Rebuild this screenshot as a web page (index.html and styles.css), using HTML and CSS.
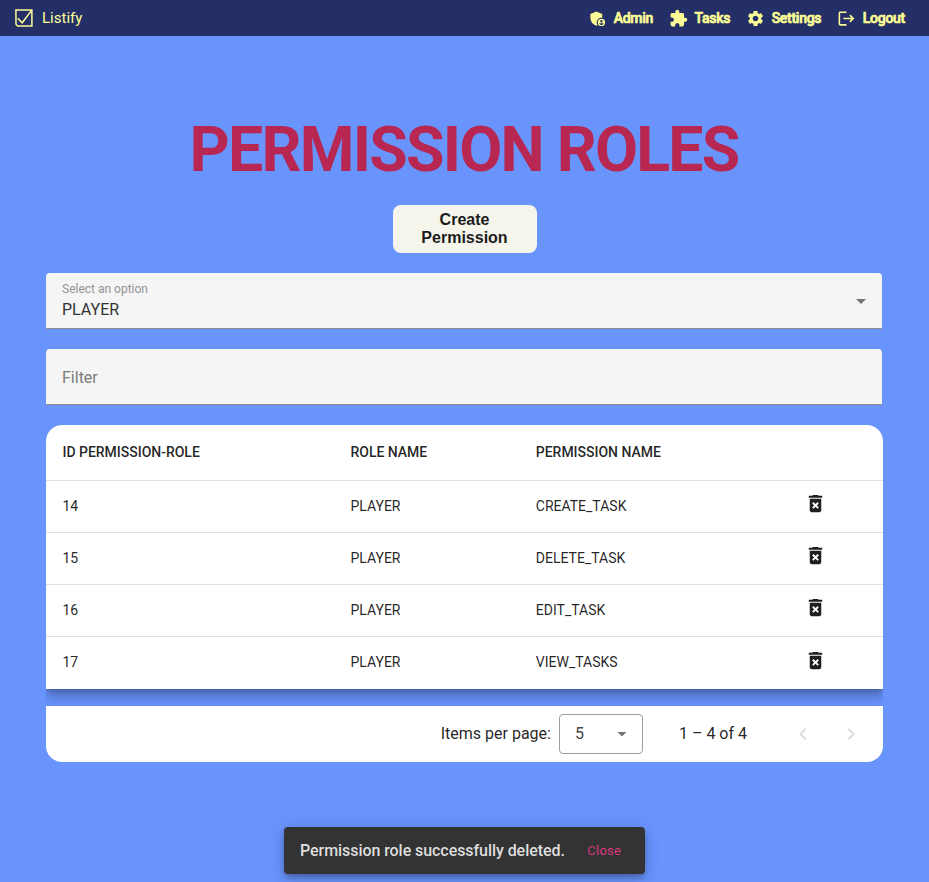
FILE: index.html
```html
<!DOCTYPE html>
<html lang="en">
<head>
<meta charset="utf-8">
<title>Listify</title>
<link rel="stylesheet" href="styles.css">
</head>
<body>
<svg class="defs" width="0" height="0" aria-hidden="true">
  <symbol id="trash" viewBox="0 0 24 24"><path d="M6 19c0 1.1.9 2 2 2h8c1.1 0 2-.9 2-2V7H6v12zm2.46-7.12 1.41-1.41L12 12.59l2.12-2.12 1.41 1.41L13.41 14l2.12 2.12-1.41 1.41L12 15.41l-2.12 2.12-1.41-1.41L10.59 14l-2.13-2.12zM15.5 4l-1-1h-5l-1 1H5v2h14V4z"/></symbol>
</svg>
<header class="navbar">
  <a class="brand">
    <svg class="brand-icon" viewBox="0 0 18 18"><path d="M.9 1.1h16v15.8H2.6L1 15.2z M2.7 9.2l4.5 4.6L16.6 1.4"/></svg>
    <span>Listify</span>
  </a>
  <nav class="links">
    <a class="link"><svg viewBox="0 0 24 24"><path d="M17 11c.34 0 .67.04 1 .09V6.27L10.5 3 3 6.27v4.91c0 4.54 3.2 8.79 7.5 9.82.55-.13 1.08-.32 1.6-.55-.69-.98-1.1-2.17-1.1-3.45 0-3.31 2.69-6 6-6z"/><path fill-rule="evenodd" d="M17 12.4a4.6 4.6 0 1 0 0 9.2 4.6 4.6 0 0 0 0-9.2zm0 1.5a1.5 1.5 0 1 1 0 3 1.5 1.5 0 0 1 0-3zm-2.8 4h5.6c-.4 1.4-1.5 2.2-2.8 2.2s-2.4-.8-2.8-2.2z"/></svg><span>Admin</span></a>
    <a class="link"><svg viewBox="0 0 24 24"><path d="M20.5 11H19V7c0-1.1-.9-2-2-2h-4V3.5C13 2.12 11.88 1 10.5 1S8 2.12 8 3.5V5H4c-1.1 0-1.99.9-1.99 2v3.8H3.5c1.49 0 2.7 1.21 2.7 2.7s-1.21 2.7-2.7 2.7H2V20c0 1.1.9 2 2 2h3.8v-1.5c0-1.49 1.21-2.7 2.7-2.7s2.7 1.21 2.7 2.7V22H17c1.1 0 2-.9 2-2v-4h1.5c1.38 0 2.5-1.12 2.5-2.5S21.88 11 20.5 11z"/></svg><span>Tasks</span></a>
    <a class="link"><svg viewBox="0 0 24 24"><path d="M19.14 12.94c.04-.3.06-.61.06-.94 0-.32-.02-.64-.07-.94l2.03-1.58c.18-.14.23-.41.12-.61l-1.92-3.32c-.12-.22-.37-.29-.59-.22l-2.39.96c-.5-.38-1.03-.7-1.62-.94l-.36-2.54c-.04-.24-.24-.41-.48-.41h-3.84c-.24 0-.43.17-.47.41l-.36 2.54c-.59.24-1.13.57-1.62.94l-2.39-.96c-.22-.08-.47 0-.59.22L2.74 8.87c-.12.21-.08.47.12.61l2.03 1.58c-.05.3-.09.63-.09.94s.02.64.07.94l-2.03 1.58c-.18.14-.23.41-.12.61l1.92 3.32c.12.22.37.29.59.22l2.39-.96c.5.38 1.03.7 1.62.94l.36 2.54c.05.24.24.41.48.41h3.84c.24 0 .44-.17.47-.41l.36-2.54c.59-.24 1.13-.56 1.62-.94l2.39.96c.22.08.47 0 .59-.22l1.92-3.32c.12-.22.07-.47-.12-.61l-2.01-1.58zM12 15.6c-1.98 0-3.6-1.62-3.6-3.6s1.62-3.6 3.6-3.6 3.6 1.62 3.6 3.6-1.62 3.6-3.6 3.6z"/></svg><span>Settings</span></a>
    <a class="link"><svg viewBox="0 0 24 24"><path d="m17 7-1.41 1.41L18.17 11H8v2h10.17l-2.58 2.58L17 17l5-5zM4 5h8V3H4c-1.1 0-2 .9-2 2v14c0 1.1.9 2 2 2h8v-2H4V5z"/></svg><span>Logout</span></a>
  </nav>
</header>
<main class="page">
  <h1 class="title">PERMISSION ROLES</h1>
  <button class="create">Create Permission</button>
  <div class="field">
    <div class="field-text">
      <span class="field-label">Select an option</span>
      <span class="field-value">PLAYER</span>
    </div>
    <span class="arrow"></span>
  </div>
  <div class="field"><span class="placeholder">Filter</span></div>
  <section class="card">
    <div class="table">
      <div class="row head"><span>ID PERMISSION-ROLE</span><span>ROLE NAME</span><span>PERMISSION NAME</span><span></span></div>
      <div class="row"><span>14</span><span>PLAYER</span><span>CREATE_TASK</span><svg class="trash"><use href="#trash"/></svg></div>
      <div class="row"><span>15</span><span>PLAYER</span><span>DELETE_TASK</span><svg class="trash"><use href="#trash"/></svg></div>
      <div class="row"><span>16</span><span>PLAYER</span><span>EDIT_TASK</span><svg class="trash"><use href="#trash"/></svg></div>
      <div class="row"><span>17</span><span>PLAYER</span><span>VIEW_TASKS</span><svg class="trash"><use href="#trash"/></svg></div>
    </div>
    <div class="paginator">
      <span class="per-page">Items per page:</span>
      <div class="size"><span>5</span><span class="arrow"></span></div>
      <span class="range">1 – 4 of 4</span>
      <svg class="chev" viewBox="0 0 24 24"><path d="M15.41 7.41 14 6l-6 6 6 6 1.41-1.41L10.83 12z"/></svg>
      <svg class="chev" viewBox="0 0 24 24"><path d="M10 6 8.59 7.41 13.17 12l-4.58 4.59L10 18l6-6z"/></svg>
    </div>
  </section>
</main>
<div class="snackbar"><span class="message">Permission role successfully deleted.</span><span class="close">Close</span></div>
</body>
</html>
```
FILE: styles.css
```css
* { box-sizing: border-box; }
body {
  margin: 0;
  height: 882px;
  overflow: hidden;
  background: #6994fc;
  color: rgba(0, 0, 0, .87);
  font-family: Roboto, "Liberation Sans", sans-serif;
  font-weight: 400;
}
.defs { position: absolute; }
.navbar {
  height: 36px;
  padding: 0 24px 0 15px;
  display: flex;
  align-items: center;
  justify-content: space-between;
  background: #232f66;
  color: #fdfd96;
}
.brand { display: flex; align-items: center; gap: 9px; font-size: 15px; }
.brand-icon { width: 18px; height: 18px; fill: none; stroke: #fdfd96; stroke-width: 1.5; }
.links { display: flex; gap: 16px; }
.link {
  display: flex;
  align-items: center;
  gap: 6.5px;
  font-size: 14px;
  font-weight: 500;
  letter-spacing: -.27px;
  -webkit-text-stroke: .7px #fdfd96;
}
.link svg { width: 19px; height: 19px; fill: #fdfd96; }
.page { padding: 83px 46px 0; }
.title {
  margin: 0;
  height: 60px;
  line-height: 62px;
  text-align: center;
  white-space: nowrap;
  color: #b82752;
  font-size: 62.5px;
  font-weight: 700;
  letter-spacing: -1.75px;
  text-indent: -1px;
}
.create {
  display: block;
  width: 144px;
  height: 48px;
  margin: 26px auto 20px;
  padding: 0 20px;
  border: 0;
  border-radius: 8px;
  background: #f5f5ec;
  color: #1c1c1c;
  font: 700 16px/18px "Liberation Sans", sans-serif;
}
.field {
  width: 836px;
  height: 56px;
  margin-bottom: 20px;
  padding: 2px 16px 0;
  display: flex;
  align-items: center;
  justify-content: space-between;
  background: #f5f5f5;
  border-bottom: 1px solid #8c8c8c;
  border-radius: 4px 4px 0 0;
}
.field-text { display: flex; flex-direction: column; }
.field-label { font-size: 12px; line-height: 14px; color: #949494; }
.field-value { font-size: 16px; line-height: 24px; padding-top: 2px; color: #333; }
.placeholder { font-size: 16px; color: #7c7c7c; }
.arrow { width: 10px; height: 5px; background: #757575; clip-path: polygon(0 0, 100% 0, 50% 100%); }
.card { width: 837px; overflow: hidden; border-radius: 16px; }
.table {
  background: #fff;
  box-shadow: 0 5px 5px -3px rgba(0,0,0,.2), 0 8px 10px 1px rgba(0,0,0,.14), 0 3px 14px 2px rgba(0,0,0,.12);
}
.row {
  height: 52px;
  padding: 0 0 2px 16.5px;
  display: grid;
  grid-template-columns: 288px 185.3px 268.7px 1fr;
  align-items: center;
  font-size: 14px;
  border-bottom: 1px solid #e0e0e0;
}
.row:last-child { border-bottom: 0; }
.head { height: 56px; font-weight: 500; letter-spacing: -.02px; }
.trash { width: 23px; height: 23px; margin-top: -4px; fill: #1f1f1f; }
.paginator {
  height: 56px;
  margin-top: 17px;
  padding: 0 20px 0 0;
  display: flex;
  align-items: center;
  justify-content: flex-end;
  position: relative;
  background: #fff;
  font-size: 16px;
}
.per-page, .range, .size span:first-child { padding-bottom: 2px; }
.size {
  width: 84px;
  height: 40px;
  margin: 0 36px 0 8px;
  padding: 0 15px;
  display: flex;
  align-items: center;
  justify-content: space-between;
  border: 1px solid #9e9e9e;
  border-radius: 4px;
  color: #444;
}
.range { margin-right: 44px; }
.chev { width: 24px; height: 24px; fill: #dcdcdc; }
.chev + .chev { margin-left: 24px; }
.snackbar {
  position: absolute;
  left: 284px;
  top: 827px;
  width: 361px;
  height: 47px;
  padding: 0 24px 0 16px;
  display: flex;
  align-items: center;
  justify-content: space-between;
  background: #333;
  border-radius: 4px;
  box-shadow: 0 3px 5px -1px rgba(0,0,0,.2), 0 6px 10px rgba(0,0,0,.14), 0 1px 18px rgba(0,0,0,.12);
}
.message { font-size: 16px; font-weight: 500; letter-spacing: -.06px; color: #dedede; }
.close { font-size: 13px; letter-spacing: .2px; color: #d8387c; }
```
